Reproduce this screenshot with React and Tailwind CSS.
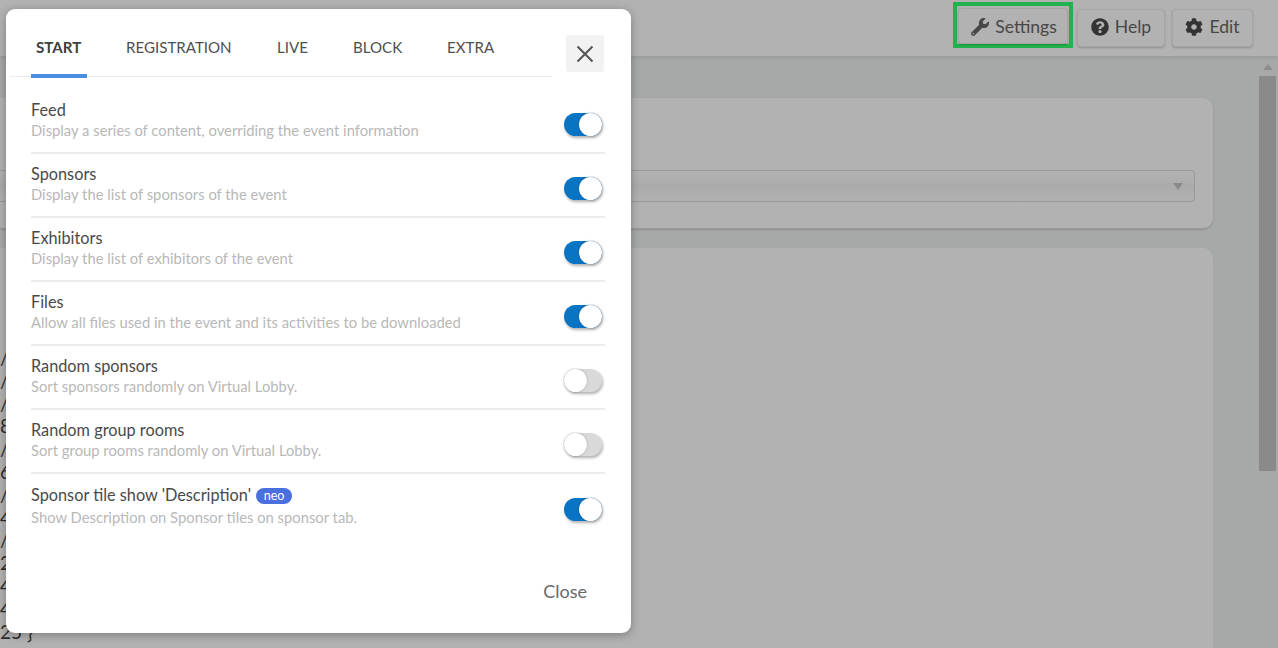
import React from "react";
import { FaWrench, FaQuestionCircle, FaCog } from "react-icons/fa";

const rows = [
  { t: "Feed", d: "Display a series of content, overriding the event information", on: true },
  { t: "Sponsors", d: "Display the list of sponsors of the event", on: true },
  { t: "Exhibitors", d: "Display the list of exhibitors of the event", on: true },
  { t: "Files", d: "Allow all files used in the event and its activities to be downloaded", on: true },
  { t: "Random sponsors", d: "Sort sponsors randomly on Virtual Lobby.", on: false },
  { t: "Random group rooms", d: "Sort group rooms randomly on Virtual Lobby.", on: false },
];

const codeLines = ["/", "/", "/", "8", "/", "6", "/", "4", "/", "2", "4", "4"];

function Toggle({ on }) {
  return (
    <div
      className={
        "relative h-[23px] w-[38px] shrink-0 rounded-full shadow-[1px_2px_3px_rgba(0,0,0,0.3)] " +
        (on ? "bg-[#0a74c4]" : "bg-[#d9d9d9]")
      }
    >
      <div
        className={
          "absolute top-0 h-[23px] w-[23px] rounded-full bg-white shadow-[0_0_2px_rgba(0,0,0,0.35)] " +
          (on ? "right-0" : "left-0")
        }
      />
    </div>
  );
}

function TopButton({ icon, label, className }) {
  return (
    <div
      className={
        "flex items-center justify-center gap-[6px] rounded-[4px] border border-[#a6a6a6] bg-[#b2b2b2] text-[17.6px] text-[#474747] shadow-[0_1px_2px_rgba(0,0,0,0.2)] " +
        className
      }
    >
      {icon}
      <span>{label}</span>
    </div>
  );
}

export default function App() {
  return (
    <div className="relative flex h-[648px] w-[1278px] flex-col overflow-hidden bg-[#a7a9a8] font-['Lato',sans-serif]">
      <header className="relative flex h-[56px] shrink-0 items-start justify-end bg-[#b2b2b2] pr-[25px] pt-[9px] shadow-[0_2px_3px_rgba(0,0,0,0.08)]">
        <div className="mr-[4px] mt-[-7px] border-[4px] border-[#22b14c] px-[1px] pt-[2px]">
          <TopButton
            icon={<FaWrench className="h-[18px] w-[18px]" />}
            label="Settings"
            className="h-[36px] w-[110px] pl-[2px] pt-[2px]"
          />
        </div>
        <TopButton
          icon={<FaQuestionCircle className="h-[18px] w-[18px] text-[#333]" />}
          label="Help"
          className="mr-[7px] h-[38px] w-[88px] pb-[2px]"
        />
        <TopButton
          icon={<FaCog className="h-[18px] w-[18px] text-[#333]" />}
          label="Edit"
          className="h-[38px] w-[81px] pb-[2px]"
        />
      </header>

      <div className="flex min-h-0 flex-1">
        <main className="flex w-[1213px] shrink-0 flex-col gap-[19px] pt-[42px]">
          <section className="h-[131px] shrink-0 rounded-r-[10px] border-b border-[#999] bg-[#b2b2b2] pt-[72px] pr-[18px] shadow-[0_1px_2px_rgba(0,0,0,0.15)]">
            <div className="flex h-[32px] items-center justify-end rounded-r-[4px] border-y border-r border-[#999] bg-gradient-to-b from-[#b3b3b3] via-[#ababab] to-[#b2b2b2] pr-[11px]">
              <div className="h-0 w-0 border-x-[5px] border-t-[7px] border-x-transparent border-t-[#8a8a8a]" />
            </div>
          </section>
          <section className="min-h-0 flex-1 rounded-tr-[10px] bg-[#b2b2b2] pt-[99px] text-[19px] leading-[22.8px] text-[#2d2d2d]">
            {codeLines.map((c, i) => (
              <div key={i} className="h-[22.8px]">{c}</div>
            ))}
            <div className="h-[22.8px] whitespace-pre">{"25 }"}</div>
          </section>
        </main>
        <aside className="relative ml-[46px] w-[17px] shrink-0 pt-[20px]">
          <div className="absolute left-[4px] top-[8px] h-0 w-0 border-x-[5px] border-b-[6px] border-x-transparent border-b-[#8c8c8c]" />
          <div className="h-[395px] w-[17px] bg-[#8a8a8a]" />
        </aside>
      </div>

      <div className="absolute left-[6px] top-[9px] flex h-[624px] w-[625px] flex-col rounded-[9px] bg-white pl-[25px] pr-[26px] shadow-[0_2px_10px_rgba(0,0,0,0.3)]">
        <div className="flex items-start">
          <nav className="relative ml-[-21px] mt-[26px] flex h-[42px] w-[542px] shrink-0 items-start border-b border-[#eaeaea] pl-[26px] text-[15.1px] uppercase leading-[24px] text-[#505050]">
            <div className="absolute bottom-[-2px] left-[21px] h-[4px] w-[56px] bg-[#4a8de0]" />
            <span className="w-[90px] font-bold text-[#404040]">Start</span>
            <span className="w-[151px]">Registration</span>
            <span className="w-[76px]">Live</span>
            <span className="w-[94px]">Block</span>
            <span>Extra</span>
          </nav>
          <div className="ml-[14px] mt-[26px] flex h-[37px] w-[38px] shrink-0 items-center justify-center rounded-[3px] bg-[#f2f2f2] text-[#555]">
            <svg width="18" height="18" viewBox="0 0 18 18" fill="none" stroke="currentColor" strokeWidth="2">
              <path d="M1.5 1.5 16.5 16.5M16.5 1.5 1.5 16.5" />
            </svg>
          </div>
        </div>

        <div className="mt-[13px]">
          {rows.map((r) => (
            <div key={r.t} className="flex h-[64px] items-center justify-between border-b-2 border-[#ededed] pb-[2px]">
              <div className="pb-[1px]">
                <div className="text-[16.3px] leading-[20px] text-[#4a4a4a]">{r.t}</div>
                <div className="text-[14.8px] leading-[20px] text-[#b8b8b8]">{r.d}</div>
              </div>
              <div className="mr-[3px] mt-[8px]">
                <Toggle on={r.on} />
              </div>
            </div>
          ))}
          <div className="flex h-[72px] items-center justify-between pb-[2px]">
            <div className="mb-[9px]">
              <div className="flex items-center text-[16.3px] leading-[24px] text-[#4a4a4a]">
                Sponsor tile show 'Description'
                <span className="ml-[5px] mt-[3px] flex h-[16px] w-[36px] items-center justify-center rounded-full bg-[#4a70e0] text-[12.5px] leading-none text-white">
                  neo
                </span>
              </div>
              <div className="text-[14.8px] leading-[20px] text-[#b8b8b8]">
                Show Description on Sponsor tiles on sponsor tab.
              </div>
            </div>
            <div className="mr-[3px]">
              <Toggle on />
            </div>
          </div>
        </div>

        <div className="mt-[33px] flex justify-end pr-[18px]">
          <span className="text-[18px] leading-[24px] text-[#696969]">Close</span>
        </div>
      </div>
    </div>
  );
}
